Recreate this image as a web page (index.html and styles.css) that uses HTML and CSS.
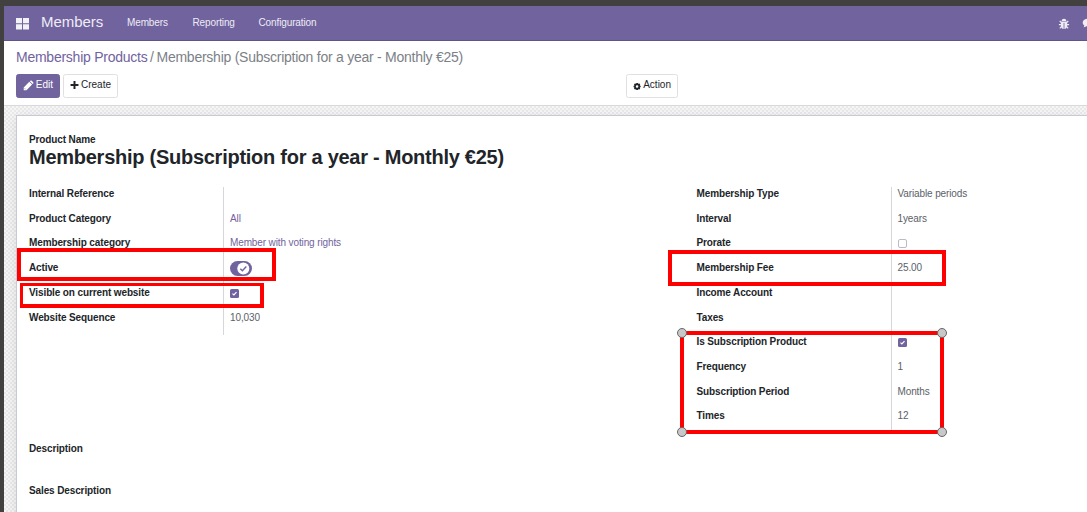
FILE: index.html
```html
<!DOCTYPE html>
<html lang="en">
<head>
<meta charset="utf-8">
<title>Members</title>
<link rel="stylesheet" href="styles.css">
</head>
<body>
<div class="app">
  <header class="navbar">
    <svg class="apps" viewBox="0 0 13 12"><path d="M0 0h6v5.3H0zM7 0h6v5.3H7zM0 6.2h6v5.3H0zM7 6.2h6v5.3H7z"/></svg>
    <span class="brand">Members</span>
    <nav class="menu"><a class="m1">Members</a><a class="m2">Reporting</a><a class="m3">Configuration</a></nav>
    <div class="systray">
      <svg class="bug" viewBox="0 0 12 12"><path class="fill" d="M3.700 3.200C3.700 1.500 4.600.8 6 .8s2.300.7 2.300 2.400zM2.900 3.800h6.200v4.300c0 1.900-1.300 2.900-3.100 2.900S2.900 10 2.900 8.100z"/><path class="leg" d="M3.300 4.500 1.700 2.900M8.700 4.500l1.600-1.600M3.200 6.700H.9M8.800 6.700h2.300M3.400 8.700l-1.600 1.600M8.600 8.700l1.600 1.600"/><path class="slit" d="M6 4.800v6"/></svg>
      <svg class="chat" viewBox="0 0 14 12"><path class="fill" d="M6 .8c3.100 0 5.300 1.700 5.300 3.800S9.100 8.400 6 8.400c-.6 0-1.100 0-1.600-.2C3.500 8.900 2.500 9.200 1.400 9.200c.6-.5.9-1 .9-1.700C1.200 6.800.7 5.800.7 4.600.7 2.500 2.900.8 6 .8z"/></svg>
    </div>
  </header>
  <section class="control">
    <div class="crumbs"><a class="crumb-link">Membership Products</a><span class="sep">/</span><span class="crumb-now">Membership (Subscription for a year - Monthly €25)</span></div>
    <div class="buttons">
      <button class="btn primary"><svg class="pencil" viewBox="0 0 12 12"><path class="fill" d="M.8 8.100 7 1.900l3.100 3.100-6.200 6.200H.8zM7.600 1.300l.7-.7c.4-.4 1-.4 1.400 0l1.700 1.700c.4.4.4 1 0 1.400l-.7.700z"/><path class="lead" d="M1.700 8.900 3.100 10.300"/></svg><span>Edit</span></button>
      <button class="btn create"><svg class="plus" viewBox="0 0 10 10"><path d="M3.900.6h2.200v3.300h3.300v2.200H6.100v3.300H3.900V6.100H.6V3.900h3.300z"/></svg><span>Create</span></button>
      <button class="btn action"><svg class="gear" viewBox="0 0 10 10"><circle cx="5" cy="5" r="2.600"/><path d="M5 .7v1.800M5 7.500v1.800M.7 5h1.800M7.500 5h1.800M1.900 1.900l1.400 1.400M6.700 6.700l1.400 1.400M8.100 1.900 6.700 3.300M3.300 6.700 1.900 8.100"/></svg><span>Action</span></button>
    </div>
  </section>
  <main class="content">
    <article class="sheet">
      <div class="name-label">Product Name</div>
      <h1 class="title"><span>Membership (Subscription for a year - Monthly €25)</span></h1>
      <div class="groups">
        <dl class="group left">
          <dt>Internal Reference</dt><dd></dd>
          <dt>Product Category</dt><dd class="link">All</dd>
          <dt>Membership category</dt><dd class="link">Member with voting rights</dd>
          <dt>Active</dt><dd><svg class="toggle" viewBox="0 0 22 15"><rect width="22" height="15" rx="7.500"/><circle cx="13.300" cy="7.500" r="6"/><path d="m10.300 7.700 2.100 2.100 3.900-4.300"/></svg></dd>
          <dt>Visible on current website</dt><dd><svg class="check" viewBox="0 0 9 9"><rect width="9" height="9" rx="1.500"/><path d="m2.500 4.600 1.400 1.300 2.600-2.700"/></svg></dd>
          <dt>Website Sequence</dt><dd>10,030</dd>
        </dl>
        <dl class="group right">
          <dt>Membership Type</dt><dd>Variable periods</dd>
          <dt>Interval</dt><dd>1years</dd>
          <dt>Prorate</dt><dd><span class="box"></span></dd>
          <dt>Membership Fee</dt><dd>25.00</dd>
          <dt>Income Account</dt><dd></dd>
          <dt>Taxes</dt><dd></dd>
          <dt>Is Subscription Product</dt><dd><svg class="check" viewBox="0 0 9 9"><rect width="9" height="9" rx="1.500"/><path d="m2.500 4.600 1.400 1.300 2.600-2.700"/></svg></dd>
          <dt>Frequency</dt><dd>1</dd>
          <dt>Subscription Period</dt><dd>Months</dd>
          <dt>Times</dt><dd>12</dd>
        </dl>
      </div>
      <div class="section">Description</div>
      <div class="section">Sales Description</div>
    </article>
  </main>
</div>
<div class="mark mark-active"></div>
<div class="mark mark-visible"></div>
<div class="mark mark-fee"></div>
<div class="mark mark-subscription"><i class="handle tl"></i><i class="handle tr"></i><i class="handle bl"></i><i class="handle br"></i></div>
</body>
</html>
```
FILE: styles.css
```css
* { box-sizing: border-box; }
body {
  margin: 0;
  height: 512px;
  overflow: hidden;
  position: relative;
  background: #424140;
  padding: 6px 0 0 4px;
  font: 10px/12px "Liberation Sans", Arial, sans-serif;
  letter-spacing: -.12px;
  color: #212529;
  white-space: nowrap;
}
.app { height: 506px; display: flex; flex-direction: column; overflow: hidden; }
.fill { fill: currentColor; }

.navbar {
  flex: none;
  height: 35px;
  display: flex;
  align-items: center;
  padding: 0 0 2px 12px;
  background: #71639e;
  border-bottom: 1px solid #5f5389;
  color: #eeecf5;
}
.apps { width: 13px; height: 12px; fill: #f3f1f8; margin-top: 3px; }
.brand { margin-left: 12px; width: 86px; font-size: 15px; line-height: 18px; letter-spacing: -.05px; }
.menu { display: flex; padding-top: 2px; }
.m1 { width: 65.500px; }
.m2 { width: 66px; }
.systray { margin-left: auto; display: flex; gap: 12px; margin-right: -9px; margin-top: 3px; }
.bug { width: 12px; height: 12px; }
.leg { stroke: currentColor; stroke-width: 1.2; fill: none; }
.slit { stroke: #71639e; stroke-width: .8; }
.chat { width: 14px; height: 12px; }

.control {
  flex: none;
  height: 65px;
  padding: 8px 0 0 12px;
  background: #fff;
  border-bottom: 1px solid #d9d9dd;
}
.crumbs { display: flex; font-size: 14px; line-height: 17px; letter-spacing: -.25px; color: #7c8187; }
.crumb-link { color: #71639e; width: 131px; }
.sep { width: 9.5px; padding-left: 3px; }
.buttons { display: flex; margin-top: 8px; gap: 3px; }
.btn {
  height: 24px;
  display: flex;
  align-items: center;
  padding: 0 6px 2px;
  border: 1px solid #dee0e4;
  border-radius: 2.500px;
  background: #fff;
  color: #212529;
  font: inherit;
}
.primary { width: 44px; background: #71639e; border-color: #71639e; color: #fff; }
.create { width: 55px; }
.action { width: 52px; margin-left: 505px; }
.pencil { width: 11px; height: 11px; margin-right: 2px; }
.lead { stroke: #71639e; stroke-width: .6; fill: none; }
.plus { width: 10px; height: 10px; margin-right: 2px; fill: currentColor; }
.gear { width: 9px; height: 9px; margin: 2px 2px 0 0; fill: none; stroke: currentColor; stroke-width: 2.100; }

.content {
  flex: 1;
  min-height: 0;
  padding: 9px 0 0 12px;
  background: repeating-conic-gradient(#e9e9e9 0 25%, #f6f6f6 0 50%) 0 0 / 4px 4px;
}
.sheet {
  height: 400px;
  padding: 18px 0 0 12px;
  background: #fff;
  border-left: 1px solid #c8c8d6;
  border-top: 1px solid #c8c8d6;
  box-shadow: 0 3px 12px rgba(0, 0, 0, .1);
}
.name-label, dt, .section { font-weight: bold; }
.title { margin: -1px 0 0; font-size: 20px; line-height: 24px; letter-spacing: -.26px; }
.groups { display: flex; height: 256px; margin-top: 18px; }
.group {
  margin: 0;
  display: grid;
  grid-template-columns: 194px 1fr;
  grid-auto-rows: 24.720px;
  align-self: flex-start;
}
.left { width: 667.500px; }
dt { padding-top: 1px; }
dd { margin: 0; padding: 1px 0 0 6px; border-left: 1px solid #d5d7db; color: #5b6168; }
dd.link { color: #71639e; }
.toggle { display: block; width: 22px; height: 15px; margin-top: -1px; fill: #71639e; }
.toggle circle { fill: #fff; }
.toggle path { fill: none; stroke: #71639e; stroke-width: 1.400; }
.check { display: block; width: 9px; height: 9px; margin-top: 2px; fill: #71639e; }
.check path { fill: none; stroke: #fff; stroke-width: 1.200; }
.box { display: block; width: 9px; height: 9px; margin-top: 2px; border: 1px solid #b9bbc9; border-radius: 2px; }
.section { height: 42px; }

.mark { position: absolute; border: 4px solid #f00; }
.mark-active { left: 17px; top: 248px; width: 259px; height: 33px; }
.mark-visible { left: 20px; top: 283px; width: 244px; height: 25px; border-width: 3px 4px 4px 3px; }
.mark-fee { left: 668px; top: 250px; width: 278px; height: 36px; }
.mark-subscription { left: 680px; top: 331px; width: 264px; height: 103px; }
.handle { position: absolute; width: 10px; height: 10px; border: 1px solid #666; border-radius: 50%; background: #c8c8c8; }
.tl { left: -7px; top: -7px; }
.tr { right: -7px; top: -7px; }
.bl { left: -7px; bottom: -7px; }
.br { right: -7px; bottom: -7px; }
```
